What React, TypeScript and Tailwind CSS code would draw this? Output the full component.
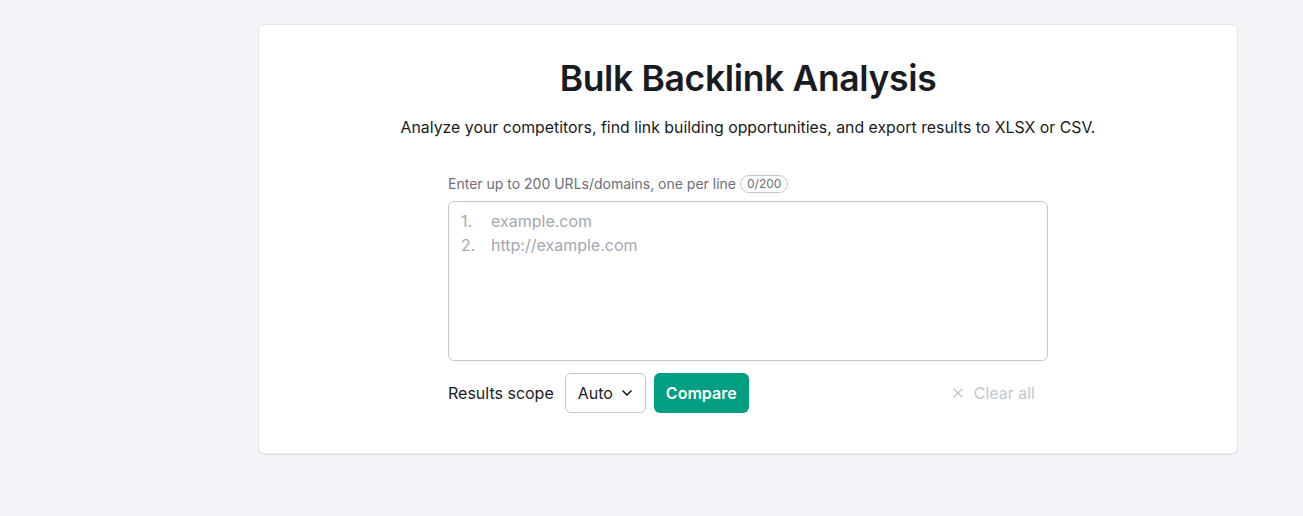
import React from 'react';
import { ChevronDown, X } from 'lucide-react';

export default function App() {
    return (
        <div className="min-h-[516px] w-full bg-[#f4f5f9] font-['Inter',sans-serif] text-[#191b23]">
            <div className="pt-6 pl-[258px] pr-[65px]">
                {/* Card */}
                <div className="rounded-md border border-[#e6e7eb] bg-white shadow-[0_1px_1px_rgba(0,0,0,0.08)] pt-[34px] pb-10">
                    <h1 className="text-center text-[35.5px] leading-10 font-semibold tracking-[-0.01em]">
                        Bulk Backlink Analysis
                    </h1>
                    <p className="mt-[17px] text-center text-[15.85px] leading-6">
                        Analyze your competitors, find link building opportunities, and export results to XLSX or CSV.
                    </p>

                    <div className="mx-auto mt-[34px] w-[600px]">
                        <div className="flex items-center gap-1 text-[14px] leading-5 text-[#6c6e79]">
                            <span>Enter up to 200 URLs/domains, one per line</span>
                            <span className="rounded-full border border-[#c4c7cf] px-1.5 text-xs leading-4 text-[#6c6e79]">0/200</span>
                        </div>

                        {/* Textarea */}
                        <div className="mt-[7px] h-[160px] rounded-md border border-[#c4c7cf] px-3 py-[7px] text-base leading-6 text-[#a4a7b0]">
                            <div className="flex">
                                <span className="w-[30px]">1.</span>
                                <span>example.com</span>
                            </div>
                            <div className="flex">
                                <span className="w-[30px]">2.</span>
                                <span>http://example.com</span>
                            </div>
                        </div>

                        {/* Controls */}
                        <div className="mt-[12px] flex items-center">
                            <span className="text-base">Results scope</span>
                            <button className="ml-[11px] flex h-10 w-[81px] items-center gap-1.5 rounded-md border border-[#c4c7cf] bg-white pl-3 text-base">
                                Auto
                                <ChevronDown size={16} strokeWidth={2.5} />
                            </button>
                            <button className="ml-2 h-10 w-[95px] rounded-md bg-[#009f81] text-base font-semibold text-white">
                                Compare
                            </button>
                            <button className="ml-auto mr-[13px] flex items-center gap-2 text-base text-[#c4c7cf]">
                                <X size={16} strokeWidth={2} />
                                Clear all
                            </button>
                        </div>
                    </div>
                </div>
            </div>
        </div>
    );
}
